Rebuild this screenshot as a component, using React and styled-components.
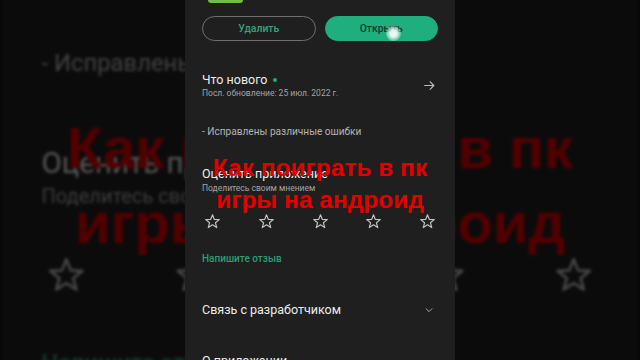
import styled, { createGlobalStyle } from "styled-components";

const GlobalStyle = createGlobalStyle`
  html, body {
    margin: 0;
    padding: 0;
    background: #080808;
  }
  body {
    font-family: Roboto, "Noto Sans", Arial, sans-serif;
  }
`;

const Stage = styled.div`
  position: relative;
  width: 640px;
  height: 360px;
  overflow: hidden;
  background: #080808;
`;

const Backdrop = styled.div`
  position: absolute;
  inset: 0;
  display: flex;
  justify-content: center;
  transform: scale(2.36);
  transform-origin: 320px 182px;
  filter: brightness(0.36) blur(0.6px);
`;

const Foreground = styled.div`
  position: relative;
  display: flex;
  justify-content: center;
  height: 100%;
`;

const Frame = styled.div`
  position: relative;
  width: 270px;
  height: 360px;
  box-sizing: border-box;
  padding: 0 17px;
  background: #1f1f1f;
  overflow: hidden;
  display: flex;
  flex-direction: column;
  color: #e6e6e6;

  & > * {
    flex: none;
  }
`;

const IconStub = styled.div`
  width: 35px;
  height: 3px;
  margin-left: 6px;
  background: #6cc04a;
  border-radius: 0 0 4px 4px;
`;

const ButtonRow = styled.div`
  display: grid;
  grid-template-columns: 1fr 1fr;
  gap: 9px;
  margin-top: 13px;
  height: 25px;
`;

const PillButton = styled.button`
  all: unset;
  box-sizing: border-box;
  display: flex;
  align-items: center;
  justify-content: center;
  border-radius: 13px;
  font-family: Roboto, "Noto Sans", sans-serif;
  font-size: 10.4px;
  font-weight: 500;
  color: ${(p) => (p.$filled ? "#123a2b" : "#2fa87a")};
  background: ${(p) => (p.$filled ? "#1fae7e" : "transparent")};
  border: 1px solid ${(p) => (p.$filled ? "#1fae7e" : "#6f6f6f")};
`;

const Section = styled.div`
  display: flex;
  align-items: center;
  justify-content: space-between;
  margin-top: ${(p) => p.$top}px;
`;

const TextCol = styled.div`
  display: flex;
  flex-direction: column;
`;

const Heading = styled.div`
  display: flex;
  align-items: center;
  gap: 6px;
  font-size: 12.5px;
  line-height: 16px;
  color: #ececec;
`;

const Dot = styled.span`
  width: 4px;
  height: 4px;
  border-radius: 50%;
  background: #1fae7e;
`;

const Caption = styled.div`
  font-size: 8.5px;
  line-height: ${(p) => p.$lh || 11}px;
  color: #a4a4a4;
`;

const Note = styled.div`
  margin-top: 26px;
  font-size: 10.1px;
  line-height: 14px;
  color: #b4b4b4;
`;

const Stars = styled.div`
  display: flex;
  justify-content: space-between;
  padding: 0 2px;
  margin-top: 19px;
  height: 16px;
`;

const LinkText = styled.div`
  margin-top: 23px;
  font-size: 10px;
  font-weight: 500;
  line-height: 13px;
  color: #2e9d74;
`;

const Overlay = styled.div`
  position: absolute;
  left: 0;
  right: 0;
  top: 152px;
  text-align: center;
  font-family: "Liberation Sans", Arial, sans-serif;
  font-weight: 700;
  font-size: 24.5px;
  line-height: 32px;
  color: #e30000;
  pointer-events: none;
`;

const Touch = styled.div`
  position: absolute;
  left: 201px;
  top: 26px;
  width: 15px;
  height: 15px;
  border-radius: 50%;
  background: radial-gradient(circle, rgba(255, 255, 255, 0.9) 30%, rgba(230, 255, 245, 0.45) 60%, rgba(255, 255, 255, 0) 100%);
`;

const Icon = styled.svg`
  flex: none;
  fill: none;
  stroke: ${(p) => p.$color || "#bdbdbd"};
  stroke-width: ${(p) => p.$stroke || 1.4};
  stroke-linecap: round;
  stroke-linejoin: round;
`;

const StarIcon = () => (
  <Icon width="17" height="17" viewBox="0 0 24 24" $stroke={1.6} $color="#c4c4c4">
    <polygon points="12,2.5 14.6,9.1 21.6,9.4 16.1,13.8 18,20.6 12,16.7 6,20.6 7.9,13.8 2.4,9.4 9.4,9.1" />
  </Icon>
);

const Frame1 = () => (
  <Frame>
    <IconStub />
    <ButtonRow>
      <PillButton>Удалить</PillButton>
      <PillButton $filled>Открыть</PillButton>
    </ButtonRow>

    <Section $top={31}>
      <TextCol>
        <Heading>
          Что нового <Dot />
        </Heading>
        <Caption>Посл. обновление: 25 июл. 2022 г.</Caption>
      </TextCol>
      <Icon width="13" height="13" viewBox="0 0 24 24" $stroke={2} style={{ marginRight: 2 }}>
        <path d="M3 12h17M13 5l7 7-7 7" />
      </Icon>
    </Section>

    <Note>- Исправлены различные ошибки</Note>

    <Section $top={27}>
      <TextCol>
        <Heading>Оценить приложение</Heading>
        <Caption $lh={12}>Поделитесь своим мнением</Caption>
      </TextCol>
    </Section>

    <Stars>
      {[0, 1, 2, 3, 4].map((i) => (
        <StarIcon key={i} />
      ))}
    </Stars>

    <LinkText>Напишите отзыв</LinkText>

    <Section $top={37}>
      <Heading>Связь с разработчиком</Heading>
      <Icon width="10" height="10" viewBox="0 0 24 24" $stroke={2.4} $color="#a8a8a8" style={{ marginRight: 4 }}>
        <path d="M5 9l7 7 7-7" />
      </Icon>
    </Section>

    <Section $top={35}>
      <Heading>О приложении</Heading>
    </Section>

    <Overlay>
      Как поиграть в пк
      <br />
      игры на андроид
    </Overlay>
    <Touch />
  </Frame>
);

const App = () => (
  <Stage>
    <GlobalStyle />
    <Backdrop>
      <Frame1 />
    </Backdrop>
    <Foreground>
      <Frame1 />
    </Foreground>
  </Stage>
);

export default App;
